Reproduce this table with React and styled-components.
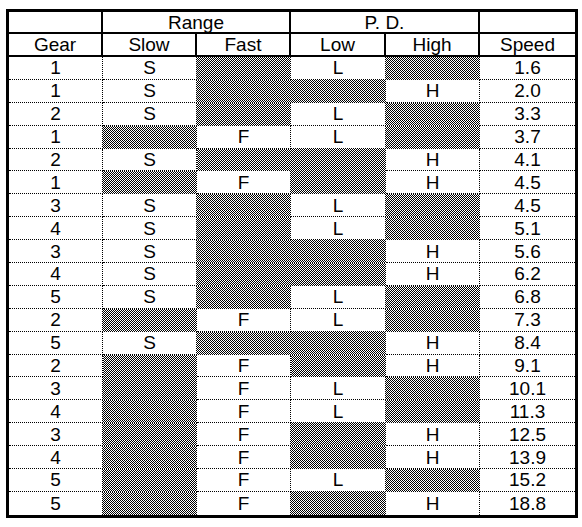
import React from 'react';
import styled, { createGlobalStyle } from 'styled-components';

const GlobalStyle = createGlobalStyle`
  html, body {
    margin: 0;
    background: #fff;
  }
  body {
    font-family: 'Liberation Sans', Arial, sans-serif;
  }
`;

const Page = styled.div`
  padding: 9px 0 0 6px;
`;

const Table = styled.div`
  display: grid;
  box-sizing: border-box;
  width: 572px;
  border: 3px solid #000;
  grid-template-columns: 94px 94px 94px 95px 94px 95px;
  grid-template-rows: 22px 23px repeat(20, 22.9px);
  font-size: 19px;
  color: #000;
`;

const HeadCell = styled.div`
  grid-column: span ${({ span }) => span || 1};
  display: flex;
  align-items: center;
  justify-content: center;
  box-sizing: border-box;
  border-right: ${({ last }) => (last ? 'none' : '2px solid #000')};
  border-bottom: 2px solid #000;
  line-height: 1;
`;

const Cell = styled.div`
  display: flex;
  align-items: center;
  justify-content: center;
  box-sizing: border-box;
  line-height: 1;
  border-right: ${({ last }) => (last ? 'none' : '1px dotted #000')};
  border-bottom: ${({ bottom }) => (bottom ? 'none' : '1px dotted #000')};
  ${({ shaded }) =>
    shaded &&
    `
    border-color: transparent;
    background-image: repeating-conic-gradient(#000 0% 25%, #fff 0% 50%);
    background-size: 2px 2px;
  `}
`;

// gear, slow, fast, low, high, speed (null = hatched cell)
const rows = [
  ['1', 'S', null, 'L', null, '1.6'],
  ['1', 'S', null, null, 'H', '2.0'],
  ['2', 'S', null, 'L', null, '3.3'],
  ['1', null, 'F', 'L', null, '3.7'],
  ['2', 'S', null, null, 'H', '4.1'],
  ['1', null, 'F', null, 'H', '4.5'],
  ['3', 'S', null, 'L', null, '4.5'],
  ['4', 'S', null, 'L', null, '5.1'],
  ['3', 'S', null, null, 'H', '5.6'],
  ['4', 'S', null, null, 'H', '6.2'],
  ['5', 'S', null, 'L', null, '6.8'],
  ['2', null, 'F', 'L', null, '7.3'],
  ['5', 'S', null, null, 'H', '8.4'],
  ['2', null, 'F', null, 'H', '9.1'],
  ['3', null, 'F', 'L', null, '10.1'],
  ['4', null, 'F', 'L', null, '11.3'],
  ['3', null, 'F', null, 'H', '12.5'],
  ['4', null, 'F', null, 'H', '13.9'],
  ['5', null, 'F', 'L', null, '15.2'],
  ['5', null, 'F', null, 'H', '18.8'],
];

const subHeads = ['Gear', 'Slow', 'Fast', 'Low', 'High', 'Speed'];

const App = () => (
  <>
    <GlobalStyle />
    <Page>
      <Table>
        <HeadCell />
        <HeadCell span={2}>Range</HeadCell>
        <HeadCell span={2}>P. D.</HeadCell>
        <HeadCell last />
        {subHeads.map((h, i) => (
          <HeadCell key={h} last={i === subHeads.length - 1}>
            {h}
          </HeadCell>
        ))}
        {rows.map((row, r) =>
          row.map((value, c) => (
            <Cell
              key={`${r}-${c}`}
              shaded={value === null}
              last={c === row.length - 1}
              bottom={r === rows.length - 1}
            >
              {value}
            </Cell>
          )),
        )}
      </Table>
    </Page>
  </>
);

export default App;
